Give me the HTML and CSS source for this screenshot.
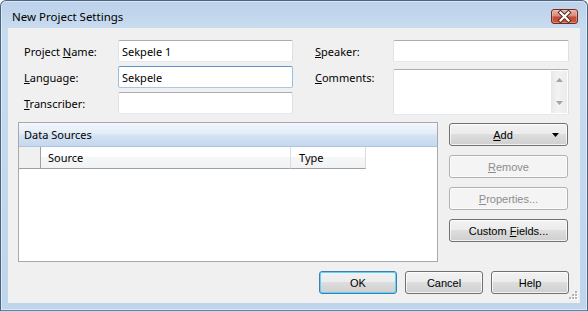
FILE: index.html
```html
<!DOCTYPE html>
<html lang="en">
<head>
<meta charset="utf-8">
<title>New Project Settings</title>
<link rel="stylesheet" href="styles.css">
</head>
<body>
<div class="window">
  <div class="titlebar">
    <span class="title">New Project Settings</span>
    <div class="close">
      <svg width="25" height="13" viewBox="0 0 25 13">
        <path d="M8.5 2.5 L16.5 10.5 M16.5 2.5 L8.5 10.5" stroke="#5b2a22" stroke-width="4.2" stroke-linecap="square" fill="none"/>
        <path d="M8.5 2.5 L16.5 10.5 M16.5 2.5 L8.5 10.5" stroke="#ffffff" stroke-width="2.2" stroke-linecap="square" fill="none"/>
      </svg>
    </div>
  </div>
  <div class="client">
    <div class="form">
      <label class="lbl">Project <u>N</u>ame:</label>
      <div class="field">Sekpele 1</div>
      <label class="lbl lbl-right"><u>S</u>peaker:</label>
      <div class="field"></div>

      <label class="lbl"><u>L</u>anguage:</label>
      <div class="field field-focus">Sekpele</div>
      <label class="lbl lbl-right"><u>C</u>omments:</label>
      <div class="memo">
        <div class="memo-scroll">
          <svg width="7" height="4" viewBox="0 0 7 4"><path d="M0 4 L3.5 0 L7 4 Z" fill="#a4a4a4"/></svg>
          <svg width="7" height="4" viewBox="0 0 7 4"><path d="M0 0 L7 0 L3.5 4 Z" fill="#a4a4a4"/></svg>
        </div>
      </div>

      <label class="lbl"><u>T</u>ranscriber:</label>
      <div class="field"></div>
    </div>

    <div class="middle">
      <div class="panel">
        <div class="panel-head">Data Sources</div>
        <div class="cols">
          <div class="col col-rh"></div>
          <div class="col col-src">Source</div>
          <div class="col col-type">Type</div>
        </div>
        <div class="panel-body"></div>
      </div>
      <div class="side">
        <div class="btn btn-add"><span class="btn-text"><u>A</u>dd</span><svg class="caret" width="7" height="4" viewBox="0 0 7 4"><path d="M0 0 L7 0 L3.5 4 Z" fill="#000"/></svg></div>
        <div class="btn btn-disabled"><span><u>R</u>emove</span></div>
        <div class="btn btn-disabled"><span><u>P</u>roperties...</span></div>
        <div class="btn"><span>Custom <u>F</u>ields...</span></div>
      </div>
    </div>

    <div class="footer">
      <div class="btn btn-default">OK</div>
      <div class="btn">Cancel</div>
      <div class="btn">Help</div>
    </div>

    <svg class="grip" width="9" height="9" viewBox="0 0 9 9">
      <g fill="#ffffff">
        <rect x="7" y="1" width="2" height="2"/><rect x="4" y="4" width="2" height="2"/><rect x="7" y="4" width="2" height="2"/>
        <rect x="1" y="7" width="2" height="2"/><rect x="4" y="7" width="2" height="2"/><rect x="7" y="7" width="2" height="2"/>
      </g>
      <g fill="#b4b4b4">
        <rect x="6" y="0" width="2" height="2"/><rect x="3" y="3" width="2" height="2"/><rect x="6" y="3" width="2" height="2"/>
        <rect x="0" y="6" width="2" height="2"/><rect x="3" y="6" width="2" height="2"/><rect x="6" y="6" width="2" height="2"/>
      </g>
    </svg>
  </div>
</div>
</body>
</html>
```
FILE: styles.css
```css
* { box-sizing: border-box; }

html, body {
  margin: 0;
  background: #ffffff;
}

body {
  font-family: "Noto Sans", "Open Sans", sans-serif;
  font-size: 11px;
  color: #000000;
}

u {
  text-decoration: underline;
  text-underline-offset: 1px;
}

.window {
  width: 588px;
  height: 311px;
  display: flex;
  flex-direction: column;
  border: 1px solid #4a6482;
  border-bottom-color: #3f8fb8;
  border-radius: 6px 6px 0 0;
  background: linear-gradient(to bottom, #bcd2ea 0px, #c8dbef 28px, #bfd5ec 100%);
  box-shadow: inset 0 0 0 1px rgba(255, 255, 255, 0.45);
}

.titlebar {
  height: 27px;
  flex: none;
  display: flex;
  align-items: center;
  padding: 4px 9px 0 11px;
}

.title {
  flex: 1;
  font-size: 11.5px;
  color: #000000;
}

.close {
  width: 27px;
  height: 15px;
  border: 1px solid #6e2c20;
  border-radius: 3px;
  background: linear-gradient(to bottom, #eab3a6 0%, #d9897a 45%, #c24a34 55%, #cf5a40 100%);
  box-shadow: inset 0 0 0 1px rgba(255, 220, 210, 0.35);
  display: flex;
  align-items: center;
  justify-content: center;
}

.client {
  flex: 1;
  margin: 0 7px 7px 7px;
  background: #f0f0f0;
  padding: 12px 12px 9px 10px;
  display: flex;
  flex-direction: column;
  position: relative;
}

/* form */
.form {
  display: grid;
  grid-template-columns: 100px 175px 100px 176px;
  grid-template-rows: repeat(3, 22px);
  row-gap: 4px;
  align-items: center;
}

.lbl {
  padding-left: 6px;
  white-space: nowrap;
}

.lbl-right {
  padding-left: 22px;
}

.field {
  height: 22px;
  background: #ffffff;
  border: 1px solid;
  border-color: #abadb3 #dbdfe6 #e3e9ef #e2e3ea;
  border-radius: 2px;
  padding: 0 3px;
  display: flex;
  align-items: center;
  white-space: nowrap;
}

.field-focus {
  border-color: #5b95c8 #98bee0 #a8c8e6 #98bee0;
}

.memo {
  grid-column: 4;
  grid-row: 2 / span 2;
  align-self: start;
  margin-top: 3px;
  height: 46px;
  background: #ffffff;
  border: 1px solid;
  border-color: #abadb3 #dbdfe6 #e3e9ef #e2e3ea;
  border-radius: 2px;
  display: flex;
  justify-content: flex-end;
  padding: 1px;
}

.memo-scroll {
  width: 16px;
  background: linear-gradient(to right, #e8e8e8, #f2f2f2 40%, #ececec);
  display: flex;
  flex-direction: column;
  align-items: center;
  justify-content: space-between;
  padding: 7px 0 8px;
}

/* middle */
.middle {
  display: flex;
  gap: 11px;
  margin-top: 8px;
}

.panel {
  width: 420px;
  height: 140px;
  border: 1px solid #a9a8ad;
  background: #ffffff;
  display: flex;
  flex-direction: column;
}

.panel-head {
  height: 24px;
  flex: none;
  display: flex;
  align-items: center;
  padding-left: 5px;
  background: linear-gradient(to bottom, #f3f7fc 0%, #e3ecf7 45%, #d3e2f2 55%, #c5d8ee 100%);
  border-bottom: 1px solid #aec4de;
}

.cols {
  display: flex;
  height: 22px;
  flex: none;
}

.col {
  height: 22px;
  display: flex;
  align-items: center;
  border-bottom: 1px solid #a0a0a0;
  border-right: 1px solid #dcdcdc;
  background: linear-gradient(to bottom, #ffffff 0%, #ffffff 45%, #f5f6f7 50%, #f1f2f4 100%);
}

.col-rh {
  width: 22px;
  background: #f0f0f0;
  border-right: 1px solid #a0a0a0;
}

.col-src {
  width: 250px;
  padding-left: 7px;
}

.col-type {
  width: 75px;
  padding-left: 8px;
}

.panel-body {
  flex: 1;
}

.side {
  width: 119px;
  display: flex;
  flex-direction: column;
  gap: 9px;
  padding-top: 1px;
}

/* buttons */
.btn {
  height: 23px;
  border: 1px solid #707070;
  border-radius: 3px;
  background: linear-gradient(to bottom, #f2f2f2 0%, #ebebeb 50%, #dddddd 50%, #cfcfcf 100%);
  box-shadow: inset 0 0 0 1px rgba(255, 255, 255, 0.75);
  font-family: "Liberation Sans", Arial, sans-serif;
  font-size: 11px;
  display: flex;
  align-items: center;
  justify-content: center;
  white-space: nowrap;
}

.btn-add {
  padding-left: 4px;
  padding-right: 8px;
}

.btn-text {
  flex: 1;
  text-align: center;
}

.caret {
  flex: none;
}

.btn-disabled {
  border-color: #adb2b5;
  background: #f4f4f4;
  box-shadow: inset 0 0 0 1px #fcfcfc;
  color: #8d8d8d;
}

.btn-default {
  border-color: #3c7fb1;
  box-shadow: inset 0 0 0 1px #5dd3f7;
}

.footer {
  margin-top: 9px;
  margin-right: -1px;
  display: flex;
  justify-content: flex-end;
  gap: 8px;
}

.footer .btn {
  width: 78px;
}

.grip {
  position: absolute;
  right: 2px;
  bottom: 3px;
}
```
